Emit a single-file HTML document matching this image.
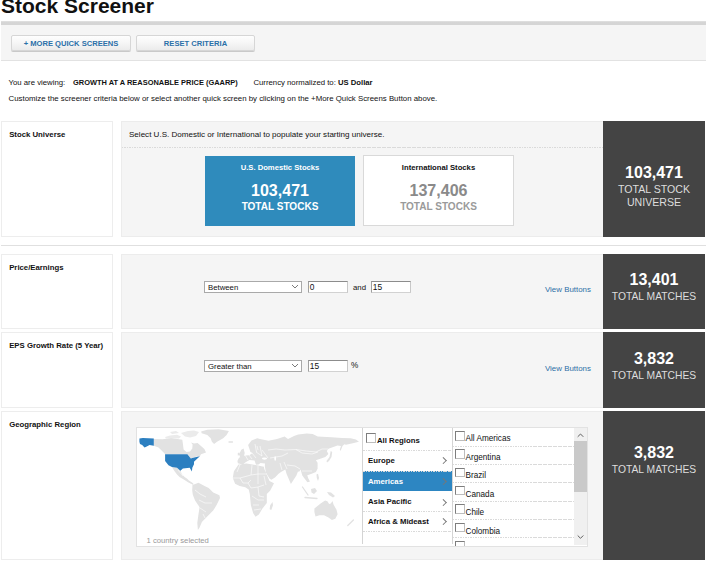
<!DOCTYPE html>
<html><head><meta charset="utf-8">
<style>
*{margin:0;padding:0;box-sizing:border-box}
html,body{width:706px;height:562px;overflow:hidden;background:#fff}
body{position:relative;font-family:"Liberation Sans",sans-serif;color:#111}
.a{position:absolute;white-space:nowrap}
.t{font-size:7.77px;line-height:1}
.b{font-weight:bold}
.h1{left:1px;top:-4.6px;font-size:21px;font-weight:bold;color:#111;line-height:21px}
.bar{left:1px;top:21px;width:705px;height:4px;background:linear-gradient(#e2e2e2,#d5d5d5 40%,#d5d5d5)}
.tb{left:1px;top:25px;width:705px;height:36px;background:#f5f5f5;border-bottom:1px solid #e2e2e2}
.btn{top:35px;height:16px;border:1px solid #d6d6d6;border-radius:2px;background:linear-gradient(#fefefe,#f6f6f6 50%,#ebebeb);box-shadow:0 1px 0 #c9c9c9;color:#2b70a8;font-weight:bold;font-size:7.6px;text-align:center;line-height:15px}
.lbox{left:1px;width:112px;background:#fff;border:1px solid #ededed}
.mid{left:121px;width:482px;background:#f5f5f5;border:1px solid #ececec;border-right:none}
.dark{left:603px;width:102px;background:#444;color:#fff;text-align:center}
.num{font-weight:bold;font-size:16px;line-height:16px;color:#fff}
.lab{font-size:10.3px;line-height:12.8px;color:#ddd}
.sep{left:1px;width:705px;height:1px;background:#e0e0e0}
.sel{border:1px solid #a9a9a9;background:#fff;height:12px}
.inp{border:1px solid;border-color:#8c8c8c #c8c8c8 #d2d2d2 #a0a0a0;background:#fff;height:12px}
.lnk{color:#2d6fa6;font-size:7.9px}
.rg{left:0;width:89px;font-size:7.77px;line-height:8px;color:#111;background:#fff}
.rg.on{background:#2d86c2;color:#fff}
.cb{position:absolute;width:9.5px;height:9.5px;border:1px solid;border-color:#7d7d7d #bdbdbd #bdbdbd #7d7d7d;background:#fff}
.chev{position:absolute;left:77.7px;top:8.2px;width:4.6px;height:4.6px;border-top:1px solid #777;border-right:1px solid #777;transform:rotate(45deg)}
.rg.on .chev{position:absolute;left:77.7px;top:8.2px;width:4.6px;height:4.6px;border-top:1px solid #777;border-right:1px solid #777;transform:rotate(45deg)}
.cr{left:0;width:121px;height:18.33px;font-size:8.2px;line-height:8px;color:#111}
.dash{height:1px;z-index:2;background:repeating-linear-gradient(90deg,#dadada 0 1.5px,transparent 1.5px 2.5px)}
</style></head><body>
<div class="a h1">Stock Screener</div>
<div class="a bar"></div>
<div class="a tb"></div>
<div class="a btn" style="left:11px;width:120px">+ MORE QUICK SCREENS</div>
<div class="a btn" style="left:136px;width:119px">RESET CRITERIA</div>

<div class="a t" style="left:8.5px;top:78.5px">You are viewing:</div>
<div class="a t b" style="left:73px;top:78.5px;font-size:7.45px">GROWTH AT A REASONABLE PRICE (GAARP)</div>
<div class="a t" style="left:253.4px;top:78.5px">Currency normalized to: <b style="font-size:7.69px">US Dollar</b></div>
<div class="a t" style="left:8.5px;top:95px;font-size:7.85px">Customize the screener criteria below or select another quick screen by clicking on the +More Quick Screens Button above.</div>

<!-- Stock Universe -->
<div class="a lbox" style="top:121px;height:116px"></div>
<div class="a t b" style="left:9.2px;top:130.6px">Stock Universe</div>
<div class="a mid" style="top:121px;height:116px"></div>
<div class="a dash" style="left:122px;top:147px;width:481px"></div>
<div class="a t" style="left:129px;top:130.8px;font-size:8.05px">Select U.S. Domestic or International to populate your starting universe.</div>
<div class="a" style="left:205px;top:156px;width:150px;height:70px;background:#2f8bbc;text-align:center;color:#fff">
  <div class="a b" style="left:0;width:150px;top:7.7px;font-size:7.66px;line-height:8px">U.S. Domestic Stocks</div>
  <div class="a b" style="left:0;width:150px;top:26px;font-size:16.05px;line-height:16px">103,471</div>
  <div class="a b" style="left:0;width:150px;top:45px;font-size:10.04px;line-height:11px">TOTAL STOCKS</div>
</div>
<div class="a" style="left:363px;top:155px;width:151px;height:71px;background:#fff;border:1px solid #d9d9d9;text-align:center">
  <div class="a b" style="left:0;width:149px;top:8.2px;font-size:7.68px;line-height:8px;color:#111">International Stocks</div>
  <div class="a b" style="left:0;width:149px;top:26.3px;font-size:16.05px;line-height:16px;color:#8a8a8a">137,406</div>
  <div class="a b" style="left:0;width:149px;top:45.3px;font-size:10.04px;line-height:11px;color:#9a9a9a">TOTAL STOCKS</div>
</div>
<div class="a dark" style="top:121px;height:116px">
  <div class="a num" style="left:0;width:102px;top:44px">103,471</div>
  <div class="a lab" style="left:0;width:102px;top:61.9px;white-space:normal;font-size:10.6px;line-height:12.9px">TOTAL STOCK<br>UNIVERSE</div>
</div>

<div class="a sep" style="top:245px"></div>

<!-- P/E -->
<div class="a lbox" style="top:254px;height:75px"></div>
<div class="a t b" style="left:9.2px;top:263.5px">Price/Earnings</div>
<div class="a mid" style="top:254px;height:75px"></div>
<div class="a sel" style="left:204px;top:281px;width:98px"></div>
<div class="a t" style="left:208px;top:284px">Between</div><svg class="a" style="left:290.5px;top:284px" width="8" height="5"><path d="M1 1 L4 4 L7 1" fill="none" stroke="#6b6b6b" stroke-width="0.9"/></svg>
<div class="a inp" style="left:308px;top:281px;width:40px"></div>
<div class="a t" style="left:309.8px;top:283.2px;font-size:8.4px">0</div>
<div class="a t" style="left:353px;top:284px">and</div>
<div class="a inp" style="left:371px;top:281px;width:40px"></div>
<div class="a t" style="left:372.8px;top:283.2px;font-size:8.4px">15</div>
<div class="a lnk" style="left:545px;top:286px;line-height:8px">View Buttons</div>
<div class="a dark" style="top:254px;height:75px">
  <div class="a num" style="left:0;width:102px;top:17.5px">13,401</div>
  <div class="a lab" style="left:0;width:102px;top:36.8px">TOTAL MATCHES</div>
</div>

<!-- EPS -->
<div class="a lbox" style="top:332px;height:76px"></div>
<div class="a t b" style="left:9.2px;top:341.5px">EPS Growth Rate (5 Year)</div>
<div class="a mid" style="top:332px;height:76px"></div>
<div class="a sel" style="left:204px;top:360px;width:98px"></div>
<div class="a t" style="left:208px;top:363px">Greater than</div><svg class="a" style="left:290.5px;top:363px" width="8" height="5"><path d="M1 1 L4 4 L7 1" fill="none" stroke="#6b6b6b" stroke-width="0.9"/></svg>
<div class="a inp" style="left:308px;top:360px;width:40px"></div>
<div class="a t" style="left:309.8px;top:362.2px;font-size:8.4px">15</div>
<div class="a t" style="left:351px;top:362.3px;font-size:8.2px">%</div>
<div class="a lnk" style="left:545px;top:365px;line-height:8px">View Buttons</div>
<div class="a dark" style="top:332px;height:76px">
  <div class="a num" style="left:0;width:102px;top:19px">3,832</div>
  <div class="a lab" style="left:0;width:102px;top:37.8px">TOTAL MATCHES</div>
</div>

<!-- Geo -->
<div class="a lbox" style="top:411px;height:149px"></div>
<div class="a t b" style="left:9.2px;top:420.5px">Geographic Region</div>
<div class="a mid" style="top:411px;height:149px"></div>
<div class="a" style="left:136px;top:427px;width:452px;height:120px;background:#fff;border:1px solid #e2e2e2"></div>
<svg class="a" style="left:0;top:0" width="706" height="562" viewBox="0 0 706 562"><path fill="#e2e2e2" d="M316.5 474.5 L318.0 473.8 L319.0 478.0 L318.0 481.0 L316.8 478.0ZM153.8 438.9 L162.7 439.3 L171.2 438.0 L182.3 439.7 L182.8 443.0 L183.6 449.5 L186.5 452.0 L190.0 451.5 L192.3 448.5 L192.6 444.5 L191.0 442.5 L194.0 443.5 L197.6 443.0 L201.0 446.0 L204.4 449.0 L206.0 452.5 L201.0 454.2 L199.9 456.3 L195.9 456.7 L190.8 458.4 L187.4 454.3 L165.1 454.3 L164.4 453.3 L158.5 447.4 L153.8 445.7ZM171.9 466.9 L177.0 467.7 L180.4 470.7 L182.1 474.5 L184.6 477.1 L187.2 478.8 L188.9 480.5 L192.0 482.5 L193.5 483.7 L192.5 484.5 L188.0 482.2 L183.8 479.6 L179.5 477.1 L177.0 474.5 L174.4 471.1ZM201.1 431.5 L207.3 429.8 L218.7 429.3 L228.9 431.0 L226.6 434.9 L223.2 438.3 L217.0 441.7 L214.1 444.0 L211.9 441.7 L210.7 438.3 L207.3 434.9 L201.7 433.2ZM192.5 484.5 L193.9 484.5 L198.5 482.8 L204.1 485.7 L208.7 487.9 L213.2 492.5 L219.4 495.3 L220.0 498.1 L216.6 504.9 L213.2 510.6 L208.7 515.1 L205.3 518.5 L201.9 521.9 L199.6 527.6 L197.9 529.9 L197.3 523.1 L198.5 514.0 L199.6 507.2 L195.1 500.4 L192.8 494.7 L192.2 490.2ZM237.4 461.0 L239.1 457.6 L245.0 455.5 L249.3 455.3 L252.7 453.1 L250.4 451.9 L249.3 448.5 L248.1 445.1 L251.5 440.6 L257.2 438.3 L260.0 439.0 L268.5 440.7 L277.0 439.0 L284.6 436.5 L288.0 439.0 L294.0 436.1 L298.2 434.4 L306.7 433.5 L312.7 434.0 L317.7 436.4 L331.4 437.2 L342.1 437.9 L350.6 438.3 L355.9 439.5 L359.0 441.8 L352.8 443.3 L346.0 444.8 L344.4 444.3 L342.5 446.0 L340.6 451.0 L339.8 449.4 L341.0 446.0 L337.5 445.6 L328.4 448.7 L326.8 451.0 L328.4 454.0 L325.3 457.1 L321.0 458.5 L315.9 460.2 L317.6 462.7 L317.6 468.7 L315.9 472.1 L311.7 473.8 L306.6 475.5 L310.0 481.4 L307.4 482.3 L304.9 478.9 L302.3 475.5 L300.6 469.5 L299.0 472.0 L298.1 471.2 L296.4 475.5 L290.9 484.0 L286.5 473.8 L285.3 469.5 L281.0 472.0 L278.6 473.8 L275.0 477.4 L271.3 479.8 L269.5 478.6 L265.9 472.5 L265.3 468.9 L264.8 466.0 L265.0 463.5 L260.5 463.0 L258.5 464.5 L256.0 464.8 L254.5 460.5 L249.5 460.0 L246.0 462.0 L242.5 464.4 L237.9 463.3ZM241.3 449.7 L243.6 448.5 L244.7 453.1 L243.6 457.6 L240.2 457.6 L239.1 454.2ZM237.8 453.0 L239.3 452.5 L239.3 455.2 L237.8 455.6ZM330.7 451.0 L332.2 452.0 L331.5 457.0 L329.0 461.0 L327.0 462.5 L326.5 461.0 L329.5 457.0ZM238.5 464.5 L246.4 463.4 L255.5 465.1 L264.0 466.8 L264.3 468.9 L269.5 481.0 L274.0 483.3 L270.1 490.7 L266.8 494.0 L266.8 503.1 L262.3 508.7 L258.9 514.4 L255.5 516.7 L253.2 513.3 L250.9 505.3 L249.8 494.0 L248.7 489.5 L245.3 487.2 L239.6 486.1 L235.1 483.8 L232.8 478.1 L233.9 471.3ZM270.2 505.3 L272.5 501.9 L273.0 505.3 L271.3 509.9 L269.6 509.3ZM314.4 508.5 L320.6 503.4 L325.1 500.6 L327.4 501.2 L329.1 504.0 L330.8 503.4 L332.5 501.0 L333.5 504.5 L336.5 509.7 L337.6 514.2 L335.3 518.7 L331.9 519.9 L328.5 517.6 L324.0 515.3 L319.5 515.3 L315.5 516.5 L314.4 511.9ZM311.0 489.0 L315.0 488.0 L317.0 491.0 L314.0 494.0 L311.5 492.5ZM327.0 492.0 L331.0 492.5 L335.0 496.0 L333.0 497.5 L329.0 495.0Z"/><path fill="#ebebeb" d="M165.0 437.0 L170.0 435.5 L177.0 434.8 L181.0 436.5 L179.0 438.4 L172.0 438.2 L166.0 438.4ZM181.0 433.0 L188.0 431.0 L194.0 430.5 L199.0 432.0 L196.0 436.0 L190.0 437.5 L185.0 436.5ZM170.0 432.0 L176.0 431.0 L179.0 433.0 L172.0 434.0Z"/><path fill="none" stroke="#e2e2e2" stroke-width="1.3" stroke-linecap="round" d="M302.5 487 L308 495 M305 497.5 L317 498.5 M347.8 525.5 L353.4 520 M306 473 L308 481 M229 442 L232.5 442"/><path fill="none" stroke="#fff" stroke-width="0.6" d="M240 464.5 L237 472 M252 465 L251 475 M258 466 L258 474 L267 474 M233 478 L240 478 L251 475 L258 474 M240 478 L243 483 L248 483 L251 480 M258 474 L258 484 M248 483 L251 488 M251 488 L258 487 L264 485 M264 476 L266 485 M258 487 L259 496 L264 497 M252 496 L258 500 L264 500 M253 505 L259 505 M254 510 L261 509 M245 455 L248 460 M249 455 L252 459 M252 453 L256 458 M256 452 L262 456 M260 446 L262 456 M262 450 L268 458 M255 444 L256.5 452 M257 446 L258 450 M268 450 L276 449 L285 450 L296 449.5 L306 451 L316 452 L322 449 L328 449 M296 449.5 L302 453 L312 454 L318 452 M270 458 L282 456 L288 453 M280 463 L282 470 M284 462 L287 469 M287 465 L295 466 L300 469 M302 471 L312 471 M195 490 L200 494 L206 497 M199 500 L205 503 L212 503 M200 508 L206 512 M203 514 L205 518 M178 470 L183 476"/><ellipse cx="264.5" cy="458.6" rx="2.6" ry="1.1" fill="#fff"/><ellipse cx="275.2" cy="458.5" rx="0.9" ry="2.2" fill="#fff"/><path fill="#2c7fc0" d="M165.1 454.3 L187.4 454.3 L190.8 458.4 L194.2 457.6 L199.9 456.3 L197.4 458.4 L194.0 461.8 L194.0 464.3 L192.3 467.7 L191.9 471.6 L189.7 467.7 L182.9 468.6 L180.4 470.7 L177.0 467.7 L171.9 466.9 L168.5 465.2 L165.1 461.0ZM139.4 438.5 L142.8 437.9 L153.8 438.5 L153.8 445.7 L149.6 445.1 L146.2 446.8 L144.5 447.4 L142.2 445.1 L140.0 444.0 L139.4 441.7Z"/></svg>
<div class="a" style="left:146.5px;top:537px;font-size:7.7px;line-height:8px;color:#9a9a9a">1 country selected</div>
<div class="a" style="left:362px;top:428px;width:91px;height:115.5px;border-left:1px solid #d4d4d4;border-right:1px solid #d4d4d4;background:#fff">
<div class="a rg" style="top:0.0px;height:22px"><span class="cb" style="left:3px;top:5.3px"></span><span class="a b" style="left:14px;top:9.2px">All Regions</span></div><div class="a dash" style="left:0;width:88px;top:22.2px"></div>
<div class="a rg" style="top:22.0px;height:20.8px"><span class="a b" style="left:5px;top:7px">Europe</span><span class="chev"></span></div><div class="a dash" style="left:0;width:88px;top:42.5px"></div>
<div class="a rg on" style="top:42.8px;height:20.6px"><span class="a b" style="left:5px;top:7px">Americas</span><span class="chev"></span></div>
<div class="a rg" style="top:63.4px;height:19.8px"><span class="a b" style="left:5px;top:7px">Asia Pacific</span><span class="chev"></span></div><div class="a dash" style="left:0;width:88px;top:83.3px"></div>
<div class="a rg" style="top:83.2px;height:19.9px"><span class="a b" style="left:5px;top:7px">Africa &amp; Mideast</span><span class="chev"></span></div><div class="a dash" style="left:0;width:88px;top:103.2px"></div>
</div>
<div class="a" style="left:453px;top:428px;width:121px;height:117.5px;overflow:hidden;background:#fff">
<div class="a cr" style="top:0.00px"><span class="cb" style="left:2.3px;top:3px"></span><span class="a" style="left:12.5px;top:7.20px">All Americas</span></div><div class="a dash" style="left:0;width:121px;top:17.80px"></div>
<div class="a cr" style="top:18.33px"><span class="cb" style="left:2.3px;top:3px"></span><span class="a" style="left:12.5px;top:7.42px">Argentina</span></div><div class="a dash" style="left:0;width:121px;top:36.13px"></div>
<div class="a cr" style="top:36.66px"><span class="cb" style="left:2.3px;top:3px"></span><span class="a" style="left:12.5px;top:7.64px">Brazil</span></div><div class="a dash" style="left:0;width:121px;top:54.46px"></div>
<div class="a cr" style="top:54.99px"><span class="cb" style="left:2.3px;top:3px"></span><span class="a" style="left:12.5px;top:7.86px">Canada</span></div><div class="a dash" style="left:0;width:121px;top:72.79px"></div>
<div class="a cr" style="top:73.32px"><span class="cb" style="left:2.3px;top:3px"></span><span class="a" style="left:12.5px;top:8.08px">Chile</span></div><div class="a dash" style="left:0;width:121px;top:91.12px"></div>
<div class="a cr" style="top:91.65px"><span class="cb" style="left:2.3px;top:3px"></span><span class="a" style="left:12.5px;top:8.30px">Colombia</span></div><div class="a dash" style="left:0;width:121px;top:109.45px"></div>
<div class="a cr" style="top:109.98px"><span class="cb" style="left:2.3px;top:3px"></span><span class="a" style="left:12.5px;top:8.52px"></span></div><div class="a dash" style="left:0;width:121px;top:127.78px"></div>
</div>
<div class="a" style="left:574px;top:428px;width:13px;height:117px;background:#f0f0f0"></div>
<div class="a" style="left:574px;top:440.5px;width:13px;height:51.5px;background:#c9c9c9"></div>
<svg class="a" style="left:574px;top:428px" width="13" height="117"><path d="M3.7 8.8 L6.5 6 L9.3 8.8" fill="none" stroke="#606060" stroke-width="1"/><path d="M3.7 107.5 L6.5 110.3 L9.3 107.5" fill="none" stroke="#606060" stroke-width="1"/></svg>
<div class="a dark" style="top:411px;height:149px">
  <div class="a num" style="left:0;width:102px;top:34px">3,832</div>
  <div class="a lab" style="left:0;width:102px;top:52.8px">TOTAL MATCHES</div>
</div>
</body></html>
